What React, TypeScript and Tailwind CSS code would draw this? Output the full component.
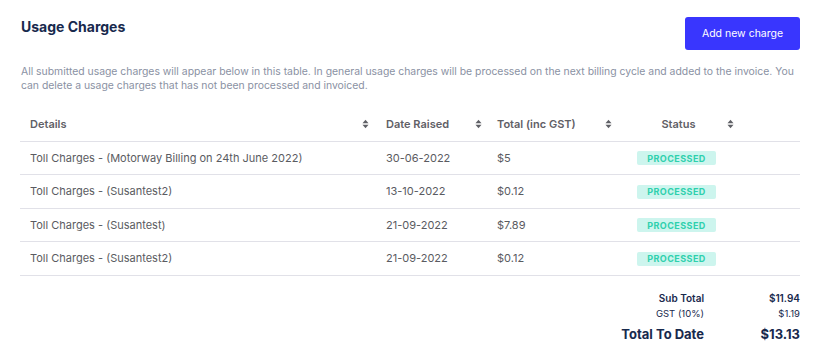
const charges = [
  { details: "Toll Charges - (Motorway Billing on 24th June 2022)", date: "30-06-2022", total: "$5" },
  { details: "Toll Charges - (Susantest2)", date: "13-10-2022", total: "$0.12" },
  { details: "Toll Charges - (Susantest)", date: "21-09-2022", total: "$7.89" },
  { details: "Toll Charges - (Susantest2)", date: "21-09-2022", total: "$0.12" },
];

function SortIcon() {
  return (
    <svg width="7" height="10" viewBox="0 0 7 10" className="shrink-0">
      <path d="M3.5 0.8 L6.5 4.2 L0.5 4.2 Z" fill="#5f6066" />
      <path d="M3.5 9.2 L6.5 5.8 L0.5 5.8 Z" fill="#5f6066" />
    </svg>
  );
}

function Badge() {
  return (
    <span className="inline-flex h-[14px] w-[79px] items-center justify-center rounded-[2px] bg-[#cdf5ee] text-[9px] font-bold uppercase tracking-[0.05em] text-[#2fd0ad]">
      Processed
    </span>
  );
}

export default function App() {
  return (
    <div
      className="min-h-[362px] w-[820px] bg-white px-[20px] pt-[17px]"
      style={{ fontFamily: "Inter, 'Noto Sans', sans-serif" }}
    >
      <div className="flex items-start justify-between">
        <h1 className="pl-px pt-px text-[14px] font-bold leading-[18px] text-[#18294d]">
          Usage Charges
        </h1>
        <button className="h-[33px] w-[115px] rounded-[3px] bg-[#3936fe] text-[10.5px] text-white">
          Add new charge
        </button>
      </div>

      <p className="mt-[15px] pl-px text-[10.4px] leading-[14px] text-[#8a91a3]">
        All submitted usage charges will appear below in this table. In general usage charges will be processed on the next billing cycle and added to the invoice. You can delete a usage charges that has not been processed and invoiced.
      </p>

      <table className="mt-[15px] w-[780px] table-fixed border-collapse text-[11px]">
        <colgroup>
          <col className="w-[356px]" />
          <col className="w-[111px]" />
          <col className="w-[133px]" />
          <col className="w-[116px]" />
          <col />
        </colgroup>
        <thead>
          <tr className="h-[33px] border-b border-[#e1e1e8] text-left text-[#5f6066]">
            <th className="pl-[10px] pr-[7px] font-semibold">
              <div className="flex items-center justify-between">
                <span>Details</span>
                <SortIcon />
              </div>
            </th>
            <th className="pl-[10px] pr-[5px] font-semibold">
              <div className="flex items-center justify-between">
                <span>Date Raised</span>
                <SortIcon />
              </div>
            </th>
            <th className="pl-[10px] pr-[8px] font-semibold">
              <div className="flex items-center justify-between">
                <span>Total (inc GST)</span>
                <SortIcon />
              </div>
            </th>
            <th className="pl-[10px] pr-[2px] font-semibold">
              <div className="flex items-center">
                <span className="flex-1 text-center">Status</span>
                <SortIcon />
              </div>
            </th>
            <th />
          </tr>
        </thead>
        <tbody className="text-[#5a5b61]">
          {charges.map((c, i) => (
            <tr key={i} className="h-[33.5px] border-b border-[#e1e1e8]">
              <td className="pl-[10px]">{c.details}</td>
              <td className="pl-[10px]">{c.date}</td>
              <td className="pl-[10px]">{c.total}</td>
              <td className="pl-[17px]">
                <Badge />
              </td>
              <td />
            </tr>
          ))}
        </tbody>
      </table>

      <div className="mt-[14px] flex flex-col items-end text-[#18294d]">
        <div className="flex items-center">
          <span className="text-right text-[10px] font-semibold leading-[16px]">Sub Total</span>
          <span className="w-[96px] text-right text-[10px] font-semibold leading-[16px]">$11.94</span>
        </div>
        <div className="flex items-center">
          <span className="text-right text-[9.5px] leading-[16px]">GST (10%)</span>
          <span className="w-[96px] text-right text-[9.5px] leading-[16px]">$1.19</span>
        </div>
        <div className="mt-[2px] flex items-center">
          <span className="text-right text-[13px] font-bold leading-[20px]">Total To Date</span>
          <span className="w-[96px] text-right text-[13px] font-bold leading-[20px]">$13.13</span>
        </div>
      </div>
    </div>
  );
}
